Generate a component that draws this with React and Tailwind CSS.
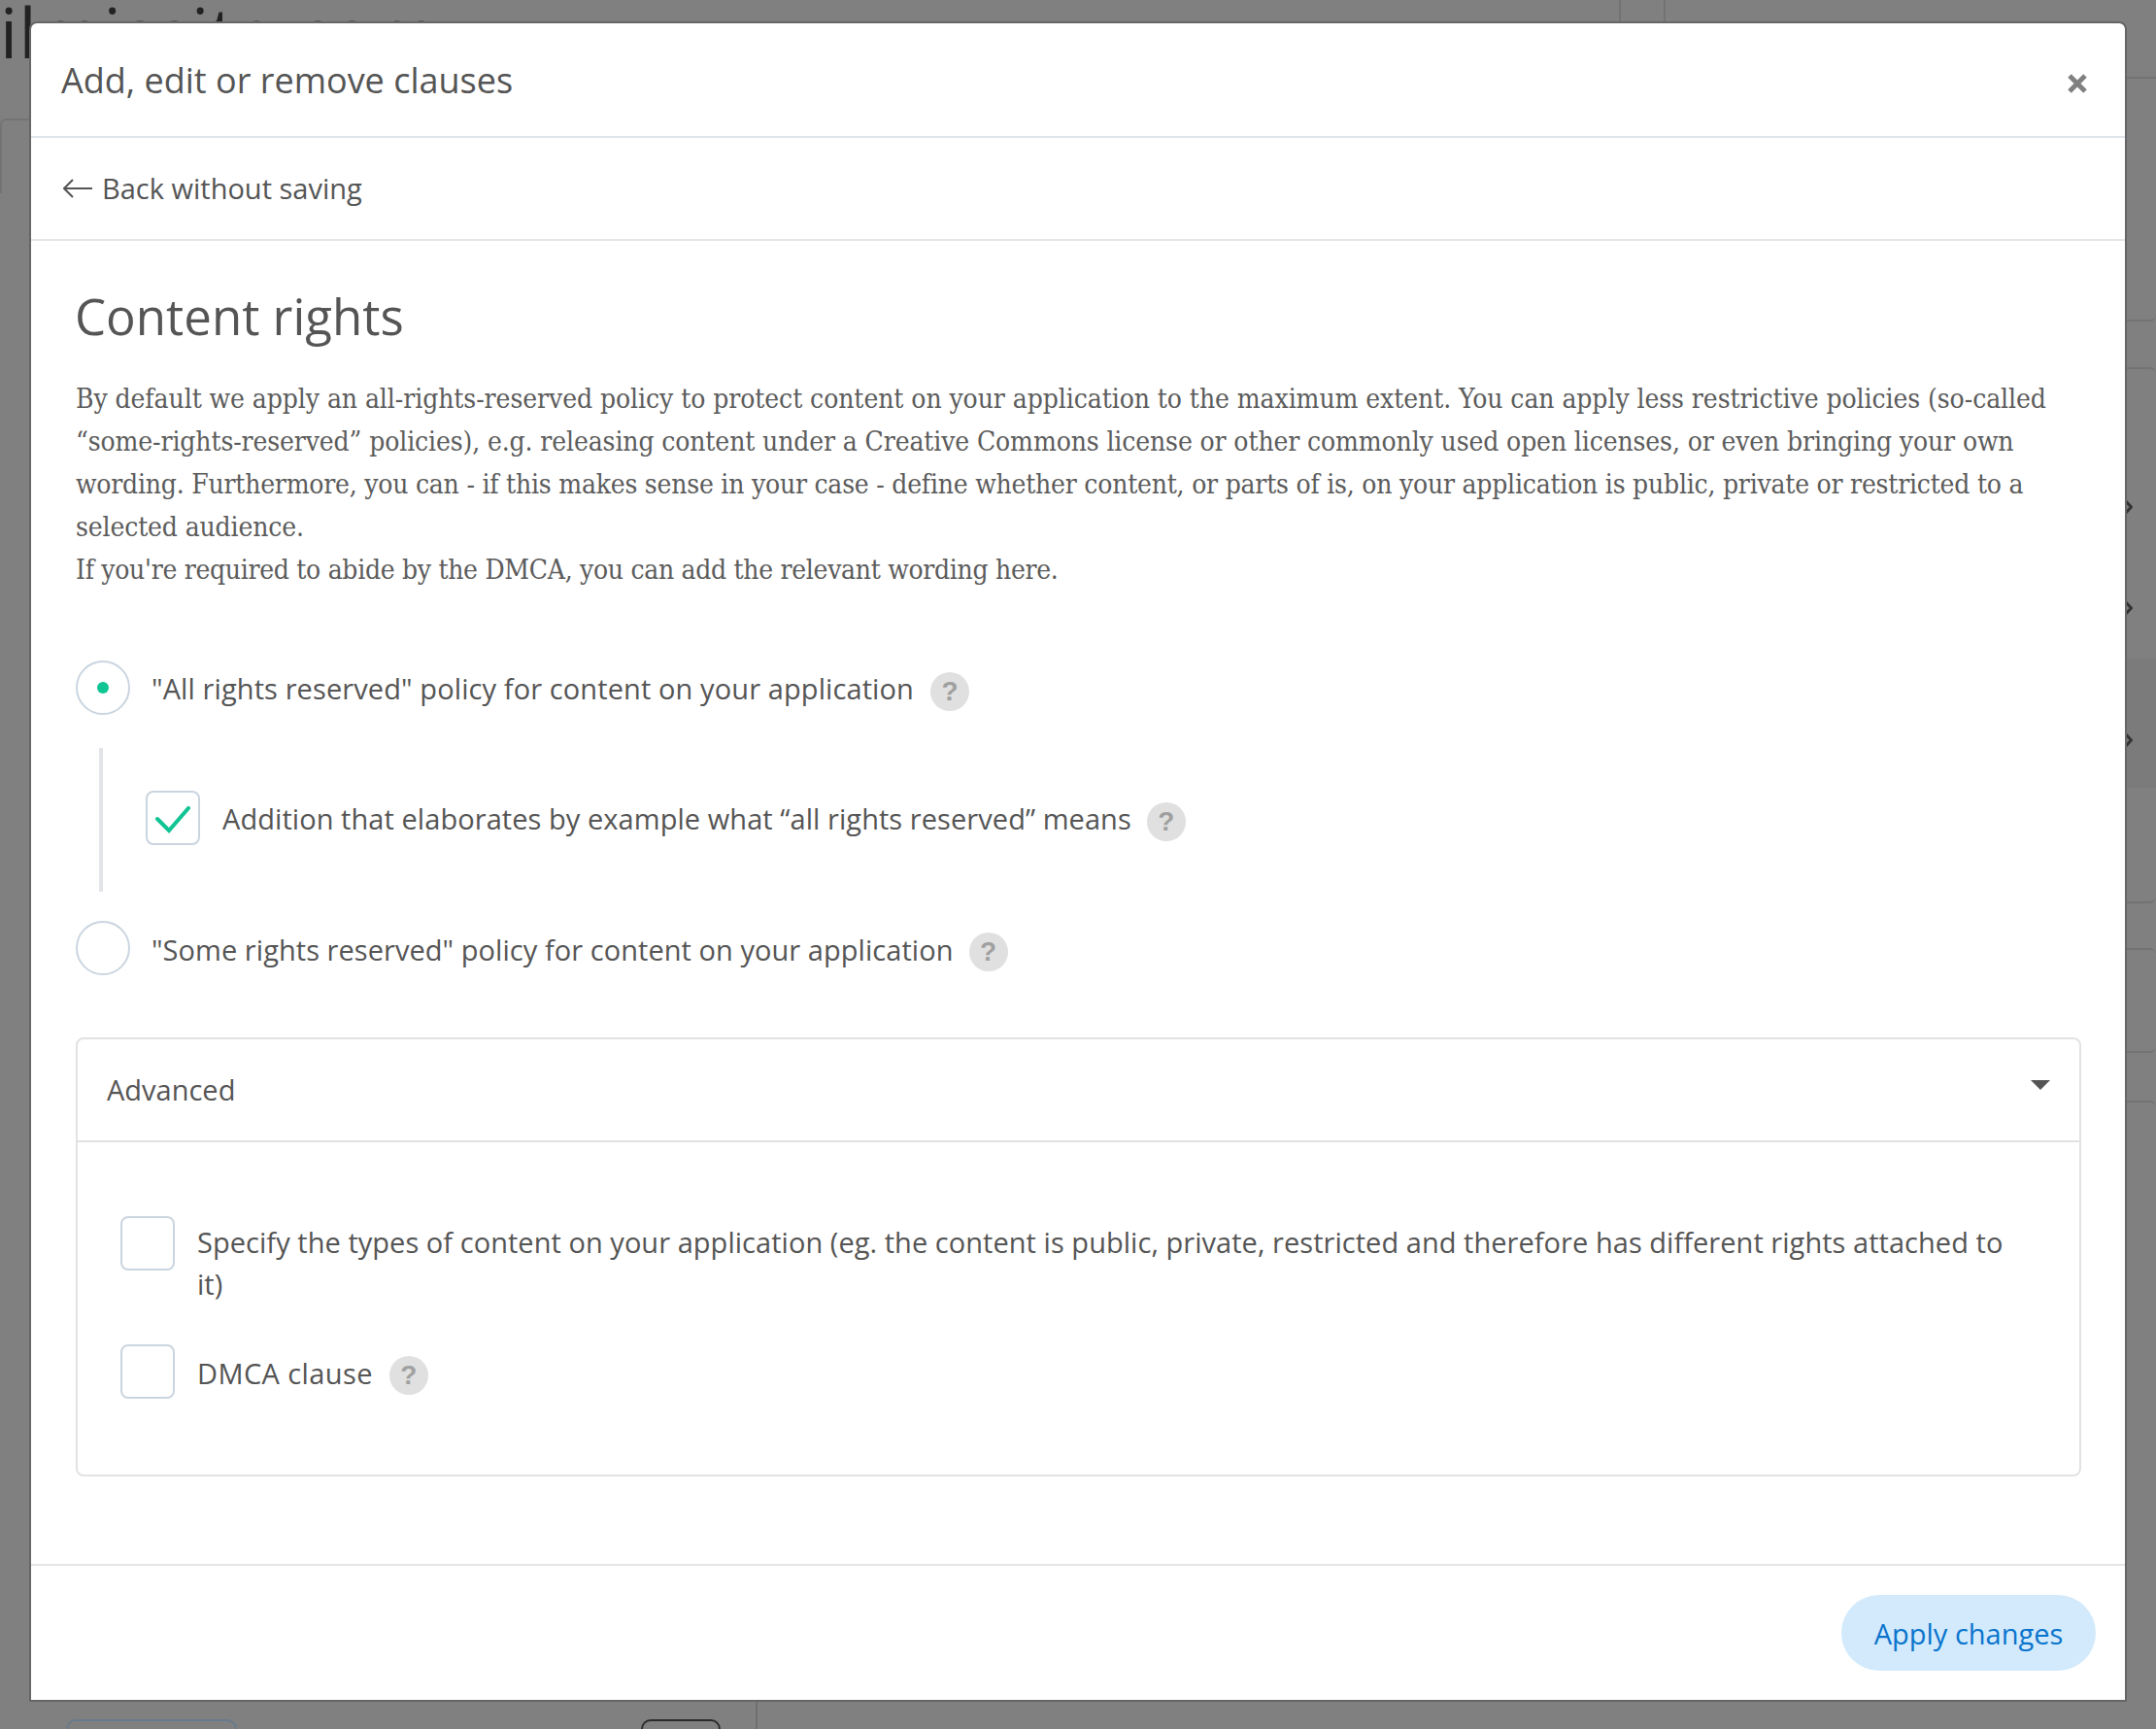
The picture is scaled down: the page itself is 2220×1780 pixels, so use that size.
import React from "react";

const grotesk = "font-['Open_Sans','Noto_Sans',sans-serif]";

function Help() {
  return (
    <span className="mt-[8px] flex h-10 w-10 shrink-0 items-center justify-center rounded-full bg-[#e0e0e0] font-['Liberation_Sans',sans-serif] text-[28px] font-bold leading-none text-[#a0a0a0]">
      ?
    </span>
  );
}

function Check({ checked }) {
  return (
    <span className="flex h-14 w-14 shrink-0 items-center justify-center rounded-lg border-2 border-[#cbd5e0] bg-white">
      {checked && (
        <svg className="mt-[3px]" width="36" height="28" viewBox="0 0 36 28" fill="none">
          <path d="M2 13 L14 25 L34 2" stroke="#10c493" strokeWidth="4" strokeLinecap="round" />
        </svg>
      )}
    </span>
  );
}

function Radio({ checked }) {
  return (
    <span className="flex h-14 w-14 shrink-0 items-center justify-center rounded-full border-2 border-[#cbd5e0] bg-white">
      {checked && <span className="h-3 w-3 rounded-full bg-[#10c493]" />}
    </span>
  );
}

function Chevron() {
  return (
    <svg width="8" height="16" viewBox="0 0 8 16" fill="none">
      <path d="M0 1 L6.5 8 L0 15" stroke="#333" strokeWidth="3" />
    </svg>
  );
}

function Backdrop() {
  return (
    <div className="flex h-full flex-col">
      <div className="flex h-[79px] items-start justify-between overflow-hidden">
        <div className="-mt-[18px] text-[72px] leading-[100px] tracking-[1.2px] text-[#222]">ilmissite.com</div>
        <div className="flex h-full items-stretch">
          <div className="mr-[44px] w-[2px] bg-[#737373]" />
          <div className="mr-[505px] w-[2px] bg-[#737373]" />
        </div>
      </div>
      <div className="flex flex-1 justify-between">
        <div className="mt-[43px] h-[77px] w-[32px] rounded-tl-md border-l-2 border-t-2 border-[#737373]" />
        <div className="flex w-[32px] flex-col">
          <div className="h-[252px] rounded-br-md border-y-2 border-[#737373]" />
          <div className="mt-[47px] h-[91px] rounded-tr-md border-t-2 border-[#737373]" />
          <div className="flex h-[105px] items-center"><Chevron /></div>
          <div className="flex h-[104px] items-center"><Chevron /></div>
          <div className="flex h-[133px] items-center bg-[#7b7b7b] pt-[34px]"><Chevron /></div>
          <div className="h-[119px] rounded-br-md border-b-2 border-[#737373]" />
          <div className="mt-[46px] h-[108px] rounded-r-md border-y-2 border-[#737373]" />
          <div className="mt-[49px] h-[108px] rounded-tr-md border-t-2 border-[#737373]" />
        </div>
      </div>
    </div>
  );
}

export default function App() {
  return (
    <div className={`relative h-[1780px] w-[2220px] overflow-hidden bg-[#808080] ${grotesk} text-[#555]`}>
      <Backdrop />
      <div className="absolute bottom-0 left-[68px] h-[10px] w-[176px] rounded-t-[20px] border-x-2 border-t-2 border-[#677a8c]" />
      <div className="absolute bottom-0 left-[660px] h-[10px] w-[82px] rounded-t-[20px] border-x-2 border-t-2 border-[#2a2a2a]" />
      <div className="absolute bottom-0 left-[778px] h-[30px] w-[2px] bg-[#707070]" />

      <div className="absolute left-[32px] top-[24px] flex h-[1726px] w-[2156px] flex-col rounded-t-md bg-white shadow-[0_0_0_2px_#666]">
        <header className="flex h-[118px] shrink-0 items-center justify-between border-b-2 border-[#e0e5e9] pl-[31px] pr-[39px]">
          <h1 className="mt-[2px] text-[36px] leading-none">Add, edit or remove clauses</h1>
          <svg className="mt-[8px]" width="20" height="20" viewBox="0 0 20 20" fill="none">
            <path d="M2 2 L18 18 M18 2 L2 18" stroke="#808080" strokeWidth="5" />
          </svg>
        </header>
        <div className="flex h-[106px] shrink-0 items-center gap-[10px] border-b-2 border-[#e6e6e6] pl-[33px]">
          <svg width="30" height="20" viewBox="0 0 30 20" fill="none">
            <path d="M10 1 L1 10 L10 19 M1 10 H30" stroke="#555" strokeWidth="2" />
          </svg>
          <span className="-mt-[2px] text-[29px] leading-none">Back without saving</span>
        </div>
        <main className="flex-1 pl-[46px] pr-[45px] pt-[47px]">
          <h2 className="-ml-[1px] text-[51px] leading-[60px]">Content rights</h2>
          <p className="mt-[34px] font-['DejaVu_Serif',serif] text-[28px] font-stretch-condensed leading-[44px] text-[#5c5c5c]">
            <span className="block whitespace-nowrap tracking-[-0.08px]">By default we apply an all-rights-reserved policy to protect content on your application to the maximum extent. You can apply less restrictive policies (so-called</span>
            <span className="block whitespace-nowrap tracking-[-0.13px]">“some-rights-reserved” policies), e.g. releasing content under a Creative Commons license or other commonly used open licenses, or even bringing your own</span>
            <span className="block whitespace-nowrap tracking-[-0.23px]">wording. Furthermore, you can - if this makes sense in your case - define whether content, or parts of is, on your application is public, private or restricted to a</span>
            <span className="block whitespace-nowrap tracking-[-0.15px]">selected audience.</span>
            <span className="block whitespace-nowrap tracking-[-0.31px]">If you're required to abide by the DMCA, you can add the relevant wording here.</span>
          </p>
          <div className="mt-[71px] flex items-center">
            <Radio checked />
            <span className="ml-[22px] mt-[1px] text-[29px] leading-[44px] tracking-[0.1px]">"All rights reserved" policy for content on your application</span>
            <span className="ml-[17px]"><Help /></span>
          </div>
          <div className="ml-[24px] mt-[34px] flex h-[148px] items-center border-l-4 border-[#e2e4e8] pb-[4px] pl-[44px]">
            <Check checked />
            <span className="ml-[23px] mt-[2px] text-[29px] leading-[44px] tracking-[0.06px]">Addition that elaborates by example what “all rights reserved” means</span>
            <span className="ml-[16px]"><Help /></span>
          </div>
          <div className="mt-[30px] flex items-center">
            <Radio />
            <span className="ml-[22px] mt-[3px] text-[29px] leading-[44px] tracking-[0.05px]">"Some rights reserved" policy for content on your application</span>
            <span className="ml-[16px]"><Help /></span>
          </div>
          <section className="mt-[64px] rounded-lg border-2 border-[#e2e2e2]">
            <div className="flex h-[106px] items-center justify-between border-b-2 border-[#e2e2e2] px-[30px]">
              <span className="-mt-[2px] text-[29px] leading-none">Advanced</span>
              <span className="mb-[10px] h-0 w-0 border-x-[10px] border-t-[10px] border-x-transparent border-t-[#555]" />
            </div>
            <div className="px-[44px] pb-[78px] pt-[76px]">
              <div className="flex items-start">
                <Check />
                <span className="ml-[23px] mt-[5px] text-[29px] leading-[43px] tracking-[0.04px]">Specify the types of content on your application (eg. the content is public, private, restricted and therefore has different rights attached to<br />it)</span>
              </div>
              <div className="mt-[41px] flex items-center">
                <Check />
                <span className="ml-[23px] mt-[3px] text-[29px] leading-[43px] tracking-[0.4px]">DMCA clause</span>
                <span className="ml-[17px]"><Help /></span>
              </div>
            </div>
          </section>
        </main>
        <footer className="flex h-[140px] shrink-0 items-center justify-end border-t-2 border-[#e6e6e6] pr-[30px]">
          <button className="flex h-[78px] w-[262px] items-center justify-center rounded-full bg-[#d2eafc] text-[29px] leading-none text-[#0a74cc]">Apply changes</button>
        </footer>
      </div>
    </div>
  );
}
